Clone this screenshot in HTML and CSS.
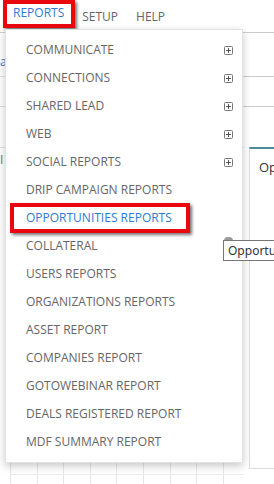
FILE: index.html
```html
<!DOCTYPE html>
<html lang="en">
<head>
    <meta charset="UTF-8">
    <meta name="viewport" content="width=device-width, initial-scale=1.0">
    <title>Reports Menu</title>
    <link rel="stylesheet" href="styles.css">
</head>
<body>
    <header class="topbar">
        <nav>
            <ul class="nav-list">
                <li><a href="#" class="nav-link active marked">REPORTS</a></li>
                <li><a href="#" class="nav-link setup">SETUP</a></li>
                <li><a href="#" class="nav-link help">HELP</a></li>
            </ul>
        </nav>
    </header>

    <div class="page">
        <div class="left-col">
            <div class="left-row first"><span class="cut-link">a</span></div>
            <div class="left-row second"></div>
            <div class="left-row third"></div>
            <div class="left-label">I</div>
            <div class="calendar"></div>
        </div>
        <div class="right-col">
            <div class="right-row first"></div>
            <div class="right-row second"></div>
            <div class="card">
                <h3 class="card-title">Opportunities</h3>
            </div>
        </div>
    </div>

    <!-- reports dropdown, open over the page -->
    <ul class="dropdown">
        <li class="menu-item">COMMUNICATE <svg class="expand" width="9" height="9" viewBox="0 0 9 9"><rect x="0.5" y="0.5" width="8" height="8" rx="1" fill="none" stroke="#777"/><path d="M4.5 2v5M2 4.5h5" stroke="#555"/></svg></li>
        <li class="menu-item">CONNECTIONS <svg class="expand" width="9" height="9" viewBox="0 0 9 9"><rect x="0.5" y="0.5" width="8" height="8" rx="1" fill="none" stroke="#777"/><path d="M4.5 2v5M2 4.5h5" stroke="#555"/></svg></li>
        <li class="menu-item">SHARED LEAD <svg class="expand" width="9" height="9" viewBox="0 0 9 9"><rect x="0.5" y="0.5" width="8" height="8" rx="1" fill="none" stroke="#777"/><path d="M4.5 2v5M2 4.5h5" stroke="#555"/></svg></li>
        <li class="menu-item">WEB <svg class="expand" width="9" height="9" viewBox="0 0 9 9"><rect x="0.5" y="0.5" width="8" height="8" rx="1" fill="none" stroke="#777"/><path d="M4.5 2v5M2 4.5h5" stroke="#555"/></svg></li>
        <li class="menu-item">SOCIAL REPORTS <svg class="expand" width="9" height="9" viewBox="0 0 9 9"><rect x="0.5" y="0.5" width="8" height="8" rx="1" fill="none" stroke="#777"/><path d="M4.5 2v5M2 4.5h5" stroke="#555"/></svg></li>
        <li class="menu-item">DRIP CAMPAIGN REPORTS</li>
        <li class="menu-item selected">OPPORTUNITIES REPORTS<span class="mark-box"></span></li>
        <li class="menu-item">COLLATERAL</li>
        <li class="menu-item">USERS REPORTS</li>
        <li class="menu-item">ORGANIZATIONS REPORTS</li>
        <li class="menu-item">ASSET REPORT</li>
        <li class="menu-item">COMPANIES REPORT</li>
        <li class="menu-item">GOTOWEBINAR REPORT</li>
        <li class="menu-item">DEALS REGISTERED REPORT</li>
        <li class="menu-item">MDF SUMMARY REPORT</li>
    </ul>

    <span class="cursor-blob"></span>
    <div class="tooltip">Opportunities Reports</div>
</body>
</html>
```

FILE: styles.css
```css
html, body {
    margin: 0;
    padding: 0;
}
body {
    width: 274px;
    height: 484px;
    overflow: hidden;
    position: relative;
    background: #fff;
    font-family: "Open Sans", "Liberation Sans", sans-serif;
    font-size: 12px;
    color: #666;
}
.topbar {
    height: 32px;
    border-bottom: 1px solid #ccc;
    box-sizing: content-box;
}
.nav-list {
    list-style: none;
    margin: 0;
    padding: 0 0 0 3px;
    display: flex;
    align-items: flex-start;
}
.nav-link {
    display: block;
    color: #666;
    text-decoration: none;
    line-height: 16px;
    padding: 9px 0 3px;
}
.nav-link.active {
    color: #2d7bd0;
}
.nav-link.marked {
    border: 4px solid #e8080e;
    padding: 1px 7px 3px 6px;
    box-shadow: 2px 2px 3px rgba(0, 0, 0, 0.55);
}
.nav-link.setup {
    margin-left: 7px;
}
.nav-link.help {
    margin-left: 18px;
}

/* page behind the menu */
.page {
    display: flex;
    height: 451px;
}
.left-col {
    flex: none;
    width: 244px;
    display: flex;
    flex-direction: column;
}
.left-row {
    border-bottom: 1px solid #ddd;
    box-sizing: border-box;
}
.left-row.first {
    height: 44px;
    padding-top: 21px;
    line-height: 16px;
}
.left-row.second {
    height: 30px;
}
.left-row.third {
    height: 41px;
}
.cut-link {
    color: #2d7bd0;
}
.left-label {
    margin-top: 4px;
    line-height: 16px;
    color: #777;
}
.calendar {
    margin-top: auto;
    height: 30px;
    margin-left: 10px;
    background:
        linear-gradient(#ececec, #ececec) 0 20px / 100% 1px no-repeat,
        repeating-linear-gradient(90deg, #e6e6e6 0 1px, transparent 1px 26.6px);
}
.right-col {
    flex: 1;
    min-width: 0;
    display: flex;
    flex-direction: column;
}
.right-row {
    border-bottom: 1px solid #ccc;
    box-sizing: border-box;
}
.right-row.first {
    height: 44px;
}
.right-row.second {
    height: 30px;
}
.card {
    margin: 40px 0 0 5px;
    height: 322px;
    box-sizing: border-box;
    border-top: 2px solid #4d8a9b;
    border-left: 1px solid #ddd;
    border-bottom: 1px solid #ddd;
    padding: 9px 9px;
    overflow: hidden;
}
.card-title {
    margin: 0;
    font-size: 13px;
    font-weight: normal;
    line-height: 18px;
    color: #333;
    white-space: nowrap;
}

/* dropdown */
.dropdown {
    position: absolute;
    top: 29px;
    left: 5px;
    width: 238px;
    box-sizing: border-box;
    margin: 0;
    padding: 6px 0 6px;
    list-style: none;
    background: #fff;
    border: 1px solid #e2e2e2;
    box-shadow: 0 3px 8px rgba(0, 0, 0, 0.22);
}
.menu-item {
    position: relative;
    display: flex;
    justify-content: space-between;
    align-items: center;
    height: 28px;
    line-height: 28px;
    padding: 0 9px 0 20px;
    white-space: nowrap;
}
.menu-item.selected {
    color: #2d7bd0;
}
.mark-box {
    position: absolute;
    top: -1px;
    left: 4px;
    width: 180px;
    height: 30px;
    box-sizing: border-box;
    border: 4px solid #e8080e;
    box-shadow: 2px 2px 3px rgba(0, 0, 0, 0.55);
}
.expand {
    display: block;
}

/* tooltip */
.cursor-blob {
    position: absolute;
    left: 224px;
    top: 237px;
    width: 9px;
    height: 6px;
    border-radius: 4px 4px 0 0;
    background: #9a9a9a;
}
.tooltip {
    position: absolute;
    left: 223px;
    top: 240px;
    height: 21px;
    box-sizing: border-box;
    padding: 0 4px;
    border: 1px solid #767676;
    background: #fff;
    color: #333;
    font-family: "Noto Sans", "DejaVu Sans", sans-serif;
    font-size: 12px;
    line-height: 19px;
    white-space: nowrap;
}
```
